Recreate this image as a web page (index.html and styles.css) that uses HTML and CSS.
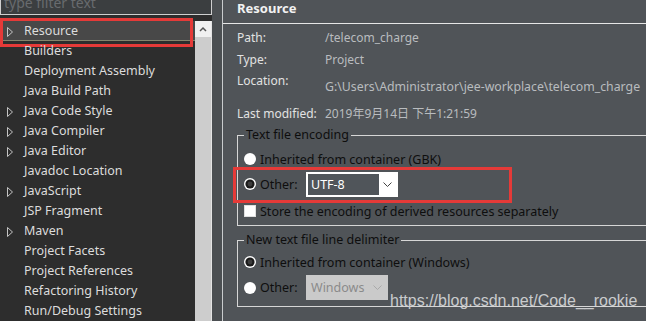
FILE: index.html
```html
<!DOCTYPE html>
<html lang="en">
<head>
    <meta charset="UTF-8">
    <title>Properties for telecom_charge</title>
    <link rel="stylesheet" href="styles.css">
</head>
<body>
    <div class="window">
        <!-- left: filter + page tree -->
        <div class="nav">
            <div class="filter"><span class="filter-text">type filter text</span></div>
            <div class="tree-wrap">
                <ul class="tree">
                    <li class="item selected"><svg class="twisty" width="6" height="10" viewBox="0 0 6 10"><polygon points="0.5,0.5 5.5,5 0.5,9.5"/></svg>Resource</li>
                    <li class="item">Builders</li>
                    <li class="item">Deployment Assembly</li>
                    <li class="item">Java Build Path</li>
                    <li class="item"><svg class="twisty" width="6" height="10" viewBox="0 0 6 10"><polygon points="0.5,0.5 5.5,5 0.5,9.5"/></svg>Java Code Style</li>
                    <li class="item"><svg class="twisty" width="6" height="10" viewBox="0 0 6 10"><polygon points="0.5,0.5 5.5,5 0.5,9.5"/></svg>Java Compiler</li>
                    <li class="item"><svg class="twisty" width="6" height="10" viewBox="0 0 6 10"><polygon points="0.5,0.5 5.5,5 0.5,9.5"/></svg>Java Editor</li>
                    <li class="item">Javadoc Location</li>
                    <li class="item"><svg class="twisty" width="6" height="10" viewBox="0 0 6 10"><polygon points="0.5,0.5 5.5,5 0.5,9.5"/></svg>JavaScript</li>
                    <li class="item">JSP Fragment</li>
                    <li class="item"><svg class="twisty" width="6" height="10" viewBox="0 0 6 10"><polygon points="0.5,0.5 5.5,5 0.5,9.5"/></svg>Maven</li>
                    <li class="item">Project Facets</li>
                    <li class="item">Project References</li>
                    <li class="item">Refactoring History</li>
                    <li class="item">Run/Debug Settings</li>
                </ul>
                <div class="scrollbar">
                    <div class="scroll-up"><svg width="8" height="6" viewBox="0 0 8 6"><path d="M1 5 L4 2 L7 5"/></svg></div>
                </div>
            </div>
        </div>
        <div class="sash"></div>
        <!-- right: Resource page -->
        <div class="page">
            <div class="page-title">Resource</div>
            <div class="info">
                <div class="info-row"><span class="label">Path:</span><span class="value">/telecom_charge</span></div>
                <div class="info-row type"><span class="label">Type:</span><span class="value">Project</span></div>
                <div class="info-row tall"><span class="label">Location:</span><span class="value">G:\Users\Administrator\jee-workplace\telecom_charge</span></div>
                <div class="info-row last"><span class="label">Last modified:</span><span class="value">2019年9月14日 下午1:21:59</span></div>
            </div>
            <fieldset class="group">
                <legend>Text file encoding</legend>
                <div class="opt">
                    <svg class="radio" width="12" height="12" viewBox="0 0 12 12"><circle cx="6" cy="6" r="6" fill="#fff"/></svg>
                    <span>Inherited from container (GBK)</span>
                </div>
                <div class="opt combo-row marked">
                    <svg class="radio" width="12" height="12" viewBox="0 0 12 12"><circle cx="6" cy="6" r="6" fill="#fff"/><circle cx="6" cy="6" r="4.6" fill="#1a1a1a"/><circle cx="6" cy="6" r="2.4" fill="#3c3c3c"/></svg>
                    <span class="opt-label">Other:</span>
                    <div class="combo">
                        <span class="combo-text">UTF-8</span>
                        <span class="combo-arrow"><svg width="9" height="5" viewBox="0 0 9 5"><path d="M0.5 0.5 L4.5 4.5 L8.5 0.5"/></svg></span>
                    </div>
                </div>
                <div class="opt check-row">
                    <span class="checkbox"></span>
                    <span>Store the encoding of derived resources separately</span>
                </div>
            </fieldset>
            <fieldset class="group second">
                <legend>New text file line delimiter</legend>
                <div class="opt">
                    <svg class="radio" width="12" height="12" viewBox="0 0 12 12"><circle cx="6" cy="6" r="6" fill="#fff"/><circle cx="6" cy="6" r="4.6" fill="#1a1a1a"/><circle cx="6" cy="6" r="2.4" fill="#3c3c3c"/></svg>
                    <span>Inherited from container (Windows)</span>
                </div>
                <div class="opt combo-row">
                    <svg class="radio" width="12" height="12" viewBox="0 0 12 12"><circle cx="6" cy="6" r="6" fill="#fff"/></svg>
                    <span class="opt-label">Other:</span>
                    <div class="combo disabled">
                        <span class="combo-text">Windows</span>
                        <span class="combo-arrow"><svg width="9" height="5" viewBox="0 0 9 5"><path d="M0.5 0.5 L4.5 4.5 L8.5 0.5"/></svg></span>
                    </div>
                </div>
            </fieldset>
        </div>
        <div class="mark">https://blog.csdn.net/Code__rookie</div>
    </div>
</body>
</html>
```

FILE: styles.css
```css
*,
*::after {
    margin: 0;
    padding: 0;
    box-sizing: border-box;
}
body {
    width: 646px;
    height: 321px;
    overflow: hidden;
    background-color: #505458;
    font-family: "Noto Sans", "Noto Sans CJK SC", sans-serif;
}
.window {
    position: relative;
    display: flex;
    height: 321px;
}
/* left tree */
.nav {
    width: 212px;
    display: flex;
    flex-direction: column;
    background-color: #2d2d2d;
}
.filter {
    width: 212px;
    height: 15px;
    border: 1px solid #cfcfcf;
    border-top: 0;
    background-color: #3b3e40;
    overflow: hidden;
}
.filter-text {
    display: block;
    margin-top: -6px;
    padding-left: 3px;
    font-size: 14px;
    line-height: 18px;
    color: #686b6e;
}
.tree-wrap {
    flex: 1;
    display: flex;
    padding-top: 6px;
}
.tree {
    width: 195px;
    list-style: none;
}
.item {
    position: relative;
    height: 20px;
    padding-left: 24px;
    font-size: 12.5px;
    line-height: 20px;
    color: #dcdcdc;
    white-space: nowrap;
}
.twisty {
    position: absolute;
    left: 7px;
    top: 6px;
}
.twisty polygon {
    fill: none;
    stroke: #c4c4c4;
}
.item.selected {
    background-color: #484848;
    border-bottom: 1px solid #85856c;
    line-height: 19px;
}
.item.selected::after {
    content: "";
    position: absolute;
    left: 0;
    top: -3px;
    width: 193px;
    height: 29px;
    border: 3px solid #e53a38;
}
.scrollbar {
    width: 17px;
    background-color: #cdcdcd;
    border-right: 1px solid #e4e4e4;
}
.scroll-up {
    height: 16px;
    background-color: #f0f0f0;
    display: flex;
    align-items: center;
    justify-content: center;
}
.scroll-up path {
    fill: none;
    stroke: #555;
    stroke-width: 1.5;
}
.sash {
    width: 10px;
    background-color: #4b4f52;
}
/* right page */
.page {
    flex: 1;
    min-width: 0;
    padding-left: 14px;
    border-left: 1px solid #c9ccce;
    overflow: hidden;
}
.page-title {
    height: 24px;
    margin-left: -14px;
    padding-left: 14px;
    border-bottom: 1px solid #e6e6e6;
    font-size: 13px;
    font-weight: bold;
    line-height: 17px;
    color: #f2f2f2;
}
.info {
    padding-top: 6px;
    font-size: 12px;
}
.info-row {
    display: flex;
    height: 22px;
    line-height: 16px;
    white-space: nowrap;
}
.info-row.type,
.info-row.last {
    height: 21px;
}
.info-row.tall {
    height: 33px;
}
.info-row.tall .value {
    padding-top: 6px;
    font-size: 12.3px;
}
.label {
    width: 88px;
    flex-shrink: 0;
    color: #e2e2e2;
}
.value {
    color: #b9bcbf;
}
/* group boxes */
.group {
    margin-right: -40px;
    padding: 6px 6px 2px;
    border: 1px solid #d6d6d6;
    font-size: 12.5px;
    color: #0e0e0e;
    min-width: 0;
}
.group legend {
    padding: 0 2px;
    line-height: 16px;
}
.group.second {
    margin-top: 6px;
    padding: 4px 6px 3px;
}
.opt {
    position: relative;
    display: flex;
    align-items: center;
    gap: 4px;
    height: 20px;
    white-space: nowrap;
}
.opt.combo-row {
    height: 30px;
}
.second .opt.combo-row {
    height: 31px;
}
.opt.check-row {
    height: 24px;
}
.opt.marked::after {
    content: "";
    position: absolute;
    left: -11px;
    top: -2px;
    width: 279px;
    height: 36px;
    border: 3px solid #e53a38;
}
.radio {
    flex-shrink: 0;
}
.opt-label {
    width: 42px;
}
.checkbox {
    width: 12px;
    height: 12px;
    background-color: #fff;
    border: 1px solid #e0e0e0;
}
.combo {
    display: flex;
    width: 92px;
    height: 25px;
    border: 2px solid #fff;
    background-color: #fff;
}
.combo-text {
    flex: 1;
    padding-left: 3px;
    background-color: #50555a;
    color: #fff;
    font-size: 12.5px;
    line-height: 21px;
}
.combo-arrow {
    width: 17px;
    display: flex;
    align-items: center;
    justify-content: center;
}
.combo-arrow path {
    fill: none;
    stroke: #444;
}
.combo.disabled {
    width: 82px;
    border-color: #cacaca;
    background-color: #cacaca;
}
.combo.disabled .combo-text {
    background-color: #cacaca;
    color: #8a8a8a;
    padding-left: 3px;
}
.combo.disabled .combo-arrow path {
    stroke: #a9a9a9;
}
/* watermark over the page */
.mark {
    position: absolute;
    left: 390px;
    top: 292px;
    font-family: "Liberation Sans", Arial, sans-serif;
    font-size: 16px;
    line-height: 18px;
    color: #c9cbcd;
    white-space: nowrap;
}
```
